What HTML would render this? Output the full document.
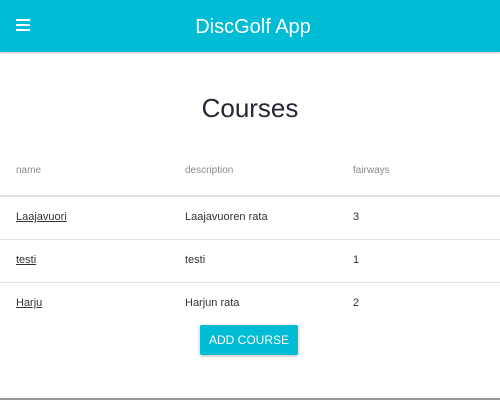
<!DOCTYPE html><html><head><style>
body{margin:0;width:500px;height:400px;overflow:hidden;background:#fff;font-family:"Liberation Sans",sans-serif;position:relative}
.hdr{position:absolute;left:0;top:0;width:500px;height:52px;background:#00bcd4;box-shadow:0 1px 2px rgba(0,0,0,.25)}
.hdr .t{position:absolute;left:0;width:506px;text-align:center;top:16px;color:#fff;font-size:20px}
.bar{position:absolute;left:16px;width:14px;height:2px;background:#fff}
h1{position:absolute;top:93px;left:0;width:500px;margin:0;text-align:center;font-size:26px;font-weight:normal;color:#262637}
.c{position:absolute;font-size:11px}
.th{color:#8a8a8a;font-size:10px;top:165px}
.line{position:absolute;left:0;width:500px;height:1px;background:#e2e2e2}
a{color:#333;text-decoration:underline}
.td{color:#333}
.btn{position:absolute;left:200px;top:325px;width:98px;height:30px;background:#00bcd4;color:#fff;font-size:12px;text-align:center;line-height:31px;border-radius:2px;box-shadow:0 1px 3px rgba(0,0,0,.3)}
</style></head><body>
<div class="hdr"><div class="bar" style="top:19px"></div><div class="bar" style="top:24px"></div><div class="bar" style="top:29px"></div><div class="t">DiscGolf App</div></div>
<h1>Courses</h1>
<div class="c th" style="left:16px">name</div><div class="c th" style="left:185px">description</div><div class="c th" style="left:353px">fairways</div>
<div class="line" style="top:195px;height:2px"></div>
<div class="c td" style="left:16px;top:211px"><a>Laajavuori</a></div><div class="c td" style="left:185px;top:211px">Laajavuoren rata</div><div class="c td" style="left:353px;top:211px">3</div>
<div class="line" style="top:239px"></div>
<div class="c td" style="left:16px;top:254px"><a>testi</a></div><div class="c td" style="left:185px;top:254px">testi</div><div class="c td" style="left:353px;top:254px">1</div>
<div class="line" style="top:282px"></div>
<div class="c td" style="left:16px;top:297px"><a>Harju</a></div><div class="c td" style="left:185px;top:297px">Harjun rata</div><div class="c td" style="left:353px;top:297px">2</div>
<div class="btn">ADD COURSE</div>
<div class="line" style="top:398px;height:2px;background:#999"></div>
</body></html>
